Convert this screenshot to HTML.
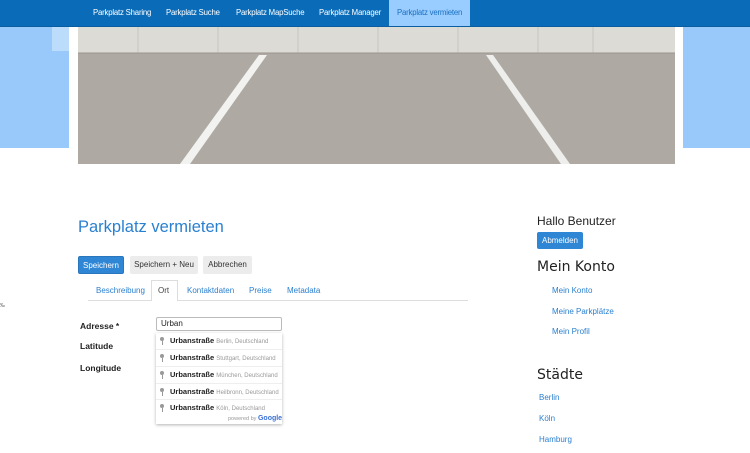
<!DOCTYPE html>
<html><head><meta charset="utf-8"><style>
*{margin:0;padding:0;box-sizing:border-box}
body{width:750px;height:453px;background:#fff;font-family:"Liberation Sans",sans-serif;position:relative;overflow:hidden}
.a{position:absolute;white-space:nowrap}
.nav{left:0;top:0;width:750px;height:27px;background:#0a6cb9;border-bottom:1px solid #0a5ea0}
.ni{top:0;height:27px;line-height:26px;color:#fff;font-size:7.8px;letter-spacing:-0.2px}
.lnk{color:#2a7fd0;font-size:8px}
.btn{height:18px;line-height:18px;font-size:8px;text-align:center;border-radius:2px;background:#ececec;color:#333}
.lab{font-size:8.5px;font-weight:bold;color:#222}
.row{left:156px;width:126px;height:17px;border-top:1px solid #eee;font-size:7.5px;line-height:16px;padding-left:14px;color:#222}
.row b{font-weight:bold}.row span{color:#999;font-size:6px}
.row i{position:absolute;left:4px;top:4px;width:4px;height:4px;border-radius:50%;background:#999}
.row i:after{content:"";position:absolute;left:1.5px;top:4px;width:1px;height:4px;background:#999}
</style></head><body>
<div class="a" style="left:0;top:27px;width:69px;height:121px;background:#99c9fb"></div>
<div class="a" style="left:52px;top:27px;width:17px;height:24px;background:#bcdcfc"></div>
<div class="a" style="left:683px;top:27px;width:67px;height:121px;background:#99c9fb"></div>
<svg class="a" style="left:78px;top:27px" width="597" height="137" viewBox="0 0 597 137">
<rect width="597" height="137" fill="#aeaaa3"/>
<rect width="597" height="26" fill="#dcdbd6"/>
<g stroke="#c6c5c0" stroke-width="1"><line x1="60" y1="0" x2="60" y2="26"/><line x1="140" y1="0" x2="140" y2="26"/><line x1="220" y1="0" x2="220" y2="26"/><line x1="300" y1="0" x2="300" y2="26"/><line x1="380" y1="0" x2="380" y2="26"/><line x1="460" y1="0" x2="460" y2="26"/><line x1="515" y1="0" x2="515" y2="26"/></g>
<line x1="0" y1="26" x2="597" y2="26" stroke="#9a968f"/>
<polygon points="181,28 189,28 112,137 102,137" fill="#f2f2f0"/>
<polygon points="408,28 415,28 492,137 483,137" fill="#eeeeec"/>
</svg>
<div class="a nav"></div>
<div class="a" style="left:389px;top:0;width:81px;height:26px;background:#99ccff"></div>
<div class="a ni" style="left:93px">Parkplatz Sharing</div>
<div class="a ni" style="left:166px">Parkplatz Suche</div>
<div class="a ni" style="left:236px">Parkplatz MapSuche</div>
<div class="a ni" style="left:319px">Parkplatz Manager</div>
<div class="a ni" style="left:397px;color:#1a70c0">Parkplatz vermieten</div>

<div class="a" style="left:78px;top:218px;font-size:16.5px;color:#2a80d0">Parkplatz vermieten</div>
<div class="a btn" style="left:78px;top:256px;width:46px;background:#2f86d4;color:#fff;border:1px solid #2a76bd">Speichern</div>
<div class="a btn" style="left:130px;top:256px;width:68px">Speichern + Neu</div>
<div class="a btn" style="left:203px;top:256px;width:49px">Abbrechen</div>
<div class="a" style="left:88px;top:300px;width:380px;height:1px;background:#ddd"></div>
<div class="a" style="left:151px;top:280px;width:27px;height:21px;background:#fff;border:1px solid #ddd;border-bottom:none"></div>
<div class="a lnk" style="left:96px;top:286px">Beschreibung</div>
<div class="a" style="left:158px;top:286px;font-size:8px;color:#444">Ort</div>
<div class="a lnk" style="left:187px;top:286px">Kontaktdaten</div>
<div class="a lnk" style="left:249px;top:286px">Preise</div>
<div class="a lnk" style="left:287px;top:286px">Metadata</div>
<div class="a" style="left:0;top:303px;font-size:5px;color:#555">‰</div>
<div class="a lab" style="left:80px;top:321px">Adresse *</div>
<div class="a lab" style="left:80px;top:341px">Latitude</div>
<div class="a lab" style="left:80px;top:363px">Longitude</div>
<div class="a" style="left:156px;top:317px;width:126px;height:14px;border:1px solid #bbb;border-radius:2px;font-size:8px;line-height:12px;padding-left:4px;color:#222">Urban</div>
<div class="a" style="left:156px;top:333px;width:126px;height:91px;background:#fff;box-shadow:0 1px 3px rgba(0,0,0,.3)"></div>
<div class="a row" style="top:333px;border-top:none"><i></i><b>Urbanstraße</b> <span>Berlin, Deutschland</span></div>
<div class="a row" style="top:349px"><i></i><b>Urbanstraße</b> <span>Stuttgart, Deutschland</span></div>
<div class="a row" style="top:366px"><i></i><b>Urbanstraße</b> <span>München, Deutschland</span></div>
<div class="a row" style="top:383px"><i></i><b>Urbanstraße</b> <span>Heilbronn, Deutschland</span></div>
<div class="a row" style="top:399px"><i></i><b>Urbanstraße</b> <span>Köln, Deutschland</span></div>
<div class="a" style="left:228px;top:415px;font-size:5.5px;color:#999">powered by <b style="color:#3a6fd8;font-size:7px">Google</b></div>

<div class="a" style="left:537px;top:214px;font-size:12px;color:#222">Hallo Benutzer</div>
<div class="a btn" style="left:537px;top:232px;width:46px;height:17px;line-height:17px;background:#2f86d4;color:#fff">Abmelden</div>
<div class="a" style="left:537px;top:259px;font-size:14px;color:#222;font-family:'DejaVu Sans',sans-serif">Mein Konto</div>
<div class="a lnk" style="left:552px;top:286px">Mein Konto</div>
<div class="a lnk" style="left:552px;top:307px">Meine Parkplätze</div>
<div class="a lnk" style="left:552px;top:327px">Mein Profil</div>
<div class="a" style="left:537px;top:367px;font-size:14px;color:#222;font-family:'DejaVu Sans',sans-serif">Städte</div>
<div class="a lnk" style="left:539px;top:393px">Berlin</div>
<div class="a lnk" style="left:539px;top:414px">Köln</div>
<div class="a lnk" style="left:539px;top:435px">Hamburg</div>
</body></html>
